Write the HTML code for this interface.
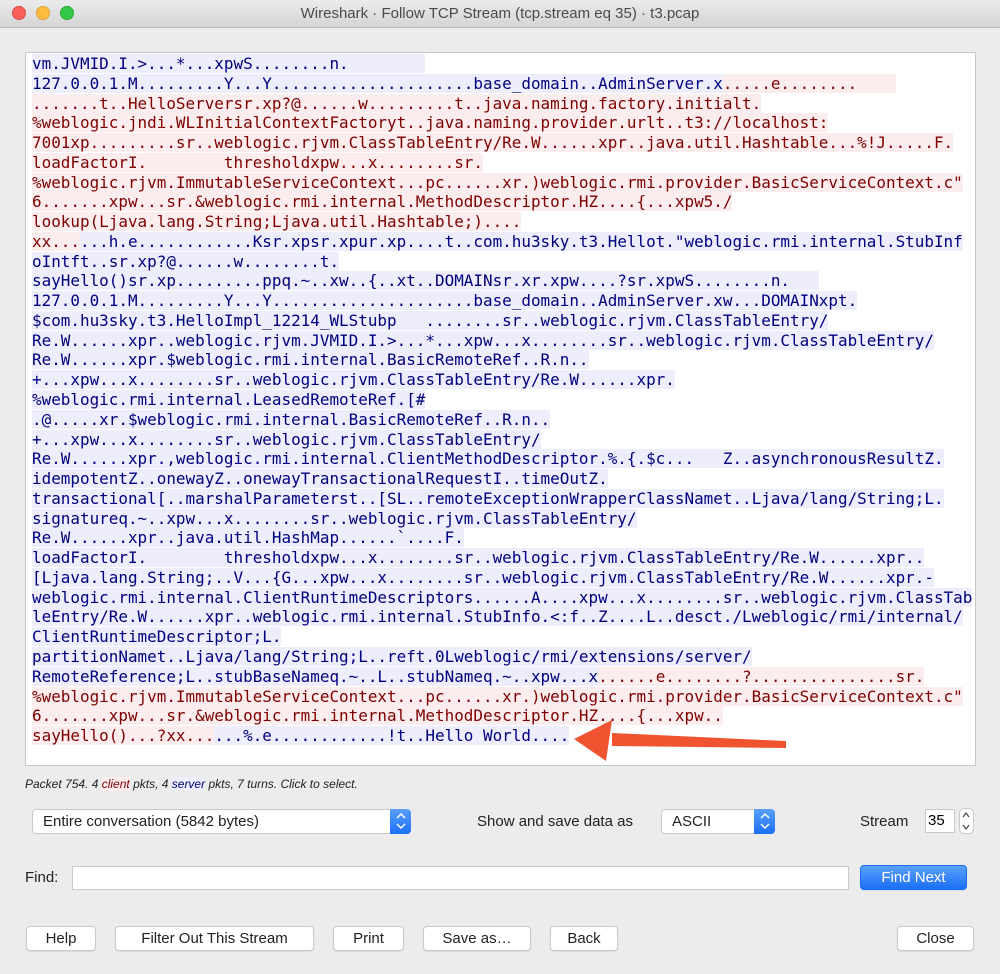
<!DOCTYPE html>
<html><head><meta charset="utf-8"><style>
*{margin:0;padding:0;box-sizing:border-box}
body{width:1000px;height:974px;background:#ececec;font-family:"Liberation Sans",sans-serif;position:relative;overflow:hidden}
.tb{position:absolute;left:0;top:0;width:1000px;height:28px;background:linear-gradient(#ebebeb,#d5d5d5);border-bottom:1px solid #b8b8b8;text-align:center;font-size:15px;line-height:28px;color:#4a4a4a}
.dot{position:absolute;top:6px;width:14px;height:14px;border-radius:50%}
.ta{position:absolute;left:25px;top:52px;width:951px;height:714px;background:#fff;border:1px solid #c8c8c8}
.code{position:absolute;left:6px;top:1px;font-family:"DejaVu Sans Mono","Liberation Mono",monospace;font-size:15.95px;line-height:19.78px}
.code div{height:19.78px;white-space:pre}
.c{background:#fbeded;color:#7f0000}
.s{background:#ededfb;color:#00007f}
.btn{position:absolute;height:25px;background:#fff;border:1px solid #c9c9c9;border-radius:4px;font-size:15px;line-height:23px;text-align:center;color:#222;box-shadow:0 1px 1px rgba(0,0,0,.08)}
.lbl{position:absolute;font-size:15px;color:#222}
.pop{position:absolute;height:25px;background:#fff;border:1px solid #c9c9c9;border-radius:4px;font-size:15px;line-height:23px;padding-left:10px;color:#222}
.pop .ar{position:absolute;right:-1px;top:-1px;width:21px;height:25px;background:linear-gradient(#5aa0fb,#1b6ff5);border-radius:0 4px 4px 0}
</style></head><body>
<div class="tb">Wireshark · Follow TCP Stream (tcp.stream eq 35) · t3.pcap
<div class="dot" style="left:12px;background:#fc605c;border:1px solid #de4a45"></div>
<div class="dot" style="left:36px;background:#fdbc40;border:1px solid #dea234"></div>
<div class="dot" style="left:60px;background:#34c84a;border:1px solid #27aa35"></div>
</div>
<div class="ta"><div class="code"><div><span class="s">vm.JVMID.I.&gt;...*...xpwS........n.        </span></div><div><span class="s">127.0.0.1.M.........Y...Y.....................base_domain..AdminServer.x</span><span class="c">.....e........    </span></div><div><span class="c">.......t..HelloServersr.xp?@......w.........t..java.naming.factory.initialt.</span></div><div><span class="c">%weblogic.jndi.WLInitialContextFactoryt..java.naming.provider.urlt..t3://localhost:</span></div><div><span class="c">7001xp.........sr..weblogic.rjvm.ClassTableEntry/Re.W......xpr..java.util.Hashtable...%!J.....F.</span></div><div><span class="c">loadFactorI.        thresholdxpw...x........sr.</span></div><div><span class="c">%weblogic.rjvm.ImmutableServiceContext...pc......xr.)weblogic.rmi.provider.BasicServiceContext.c"</span></div><div><span class="c">6.......xpw...sr.&amp;weblogic.rmi.internal.MethodDescriptor.HZ....{...xpw5./</span></div><div><span class="c">lookup(Ljava.lang.String;Ljava.util.Hashtable;)....</span></div><div><span class="c">xx...</span><span class="s">...h.e............Ksr.xpsr.xpur.xp....t..com.hu3sky.t3.Hellot."weblogic.rmi.internal.StubInf</span></div><div><span class="s">oIntft..sr.xp?@......w........t.</span></div><div><span class="s">sayHello()sr.xp.........ppq.~..xw..{..xt..DOMAINsr.xr.xpw....?sr.xpwS........n.   </span></div><div><span class="s">127.0.0.1.M.........Y...Y.....................base_domain..AdminServer.xw...DOMAINxpt.</span></div><div><span class="s">$com.hu3sky.t3.HelloImpl_12214_WLStubp   ........sr..weblogic.rjvm.ClassTableEntry/</span></div><div><span class="s">Re.W......xpr..weblogic.rjvm.JVMID.I.&gt;...*...xpw...x........sr..weblogic.rjvm.ClassTableEntry/</span></div><div><span class="s">Re.W......xpr.$weblogic.rmi.internal.BasicRemoteRef..R.n..</span></div><div><span class="s">+...xpw...x........sr..weblogic.rjvm.ClassTableEntry/Re.W......xpr.</span></div><div><span class="s">%weblogic.rmi.internal.LeasedRemoteRef.[#</span></div><div><span class="s">.@.....xr.$weblogic.rmi.internal.BasicRemoteRef..R.n..</span></div><div><span class="s">+...xpw...x........sr..weblogic.rjvm.ClassTableEntry/</span></div><div><span class="s">Re.W......xpr.,weblogic.rmi.internal.ClientMethodDescriptor.%.{.$c...   Z..asynchronousResultZ.</span></div><div><span class="s">idempotentZ..onewayZ..onewayTransactionalRequestI..timeOutZ.</span></div><div><span class="s">transactional[..marshalParameterst..[SL..remoteExceptionWrapperClassNamet..Ljava/lang/String;L.</span></div><div><span class="s">signatureq.~..xpw...x........sr..weblogic.rjvm.ClassTableEntry/</span></div><div><span class="s">Re.W......xpr..java.util.HashMap......`....F.</span></div><div><span class="s">loadFactorI.        thresholdxpw...x........sr..weblogic.rjvm.ClassTableEntry/Re.W......xpr..</span></div><div><span class="s">[Ljava.lang.String;..V...{G...xpw...x........sr..weblogic.rjvm.ClassTableEntry/Re.W......xpr.-</span></div><div><span class="s">weblogic.rmi.internal.ClientRuntimeDescriptors......A....xpw...x........sr..weblogic.rjvm.ClassTab</span></div><div><span class="s">leEntry/Re.W......xpr..weblogic.rmi.internal.StubInfo.&lt;:f..Z....L..desct./Lweblogic/rmi/internal/</span></div><div><span class="s">ClientRuntimeDescriptor;L.</span></div><div><span class="s">partitionNamet..Ljava/lang/String;L..reft.0Lweblogic/rmi/extensions/server/</span></div><div><span class="s">RemoteReference;L..stubBaseNameq.~..L..stubNameq.~..xpw...x</span><span class="c">......e........?...............sr.</span></div><div><span class="c">%weblogic.rjvm.ImmutableServiceContext...pc......xr.)weblogic.rmi.provider.BasicServiceContext.c"</span></div><div><span class="c">6.......xpw...sr.&amp;weblogic.rmi.internal.MethodDescriptor.HZ....{...xpw..</span></div><div><span class="c">sayHello()...?xx...</span><span class="s">...%.e............!t..Hello World....</span></div></div></div>
<svg style="position:absolute;left:0;top:0" width="1000" height="974"><path d="M612 733 L786 741 L786 748 L612 746 Z" fill="#ef5330"/><path d="M574 739 L612 720 L606 761 Z" fill="#ef5330"/>
<g fill="none" stroke="#fff" stroke-width="1.5"><path d="M397 818 L401 814 L405 818 M397 824 L401 828 L405 824"/><path d="M761 818 L765 814 L769 818 M761 824 L765 828 L769 824"/></g>
<g fill="none" stroke="#444" stroke-width="1.2"><path d="M963 817 L966 813 L969 817 M963 825 L966 829 L969 825"/></g></svg>
<div class="lbl" style="left:25px;top:777px;font-size:12px;font-style:italic">Packet 754. 4 <span style="color:#7f0000;background:#fbeded">client</span> pkts, 4 <span style="color:#00007f;background:#ededfb">server</span> pkts, 7 turns. Click to select.</div>
<div class="pop" style="left:32px;top:809px;width:379px">Entire conversation (5842 bytes)<div class="ar"></div></div>
<div class="lbl" style="left:477px;top:813px">Show and save data as</div>
<div class="pop" style="left:661px;top:809px;width:114px">ASCII<div class="ar"></div></div>
<div class="lbl" style="left:860px;top:813px">Stream</div>
<div style="position:absolute;left:925px;top:809px;width:30px;height:24px;background:#fff;border:1px solid #c9c9c9;font-size:15px;line-height:22px;padding-left:2px">35</div>
<div style="position:absolute;left:959px;top:808px;width:15px;height:26px;background:#fff;border:1px solid #c9c9c9;border-radius:5px"></div>
<svg style="position:absolute;left:0;top:0" width="1000" height="974"><g fill="none" stroke="#444" stroke-width="1.2"><path d="M963 817 L966 813 L969 817 M963 825 L966 829 L969 825"/></g><g fill="none" stroke="#fff" stroke-width="1.5"><path d="M397 818 L401 814 L405 818 M397 824 L401 828 L405 824"/><path d="M761 818 L765 814 L769 818 M761 824 L765 828 L769 824"/></g></svg>
<div class="lbl" style="left:25px;top:869px">Find:</div>
<div style="position:absolute;left:72px;top:866px;width:777px;height:24px;background:#fff;border:1px solid #c9c9c9"></div>
<div class="btn" style="left:860px;top:865px;width:107px;background:linear-gradient(#5aa0fb,#1b6ff5);border-color:#1b6ff5;color:#fff">Find Next</div>
<div class="btn" style="left:26px;top:926px;width:70px">Help</div>
<div class="btn" style="left:115px;top:926px;width:199px">Filter Out This Stream</div>
<div class="btn" style="left:333px;top:926px;width:71px">Print</div>
<div class="btn" style="left:423px;top:926px;width:108px">Save as…</div>
<div class="btn" style="left:550px;top:926px;width:68px">Back</div>
<div class="btn" style="left:897px;top:926px;width:77px">Close</div>
</body></html>
